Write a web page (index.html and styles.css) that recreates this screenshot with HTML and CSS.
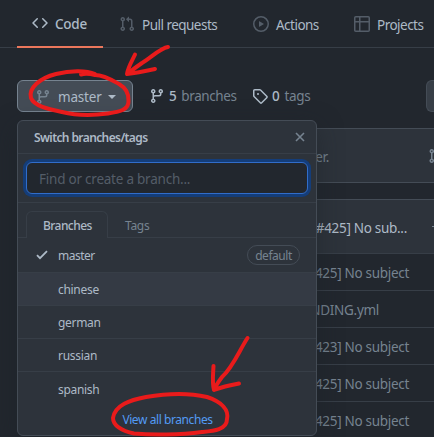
FILE: index.html
```html
<!DOCTYPE html>
<html lang="en">
<head>
<meta charset="utf-8">
<title>Branches</title>
<link rel="stylesheet" href="styles.css">
</head>
<body>
<svg class="defs" aria-hidden="true">
  <symbol id="branch" viewBox="0 0 16 16"><path fill-rule="evenodd" d="M11.75 2.5a.75.75 0 100 1.5.75.75 0 000-1.5zm-2.25.75a2.25 2.25 0 113 2.122V6A2.5 2.5 0 0110 8.5H6a1 1 0 00-1 1v1.128a2.251 2.251 0 11-1.5 0V5.372a2.25 2.25 0 111.5 0v1.836A2.492 2.492 0 016 7h4a1 1 0 001-1v-.628A2.25 2.25 0 019.5 3.25zM4.25 12a.75.75 0 100 1.5.75.75 0 000-1.5zM3.5 3.25a.75.75 0 111.5 0 .75.75 0 01-1.5 0z"/></symbol>
  <symbol id="pull" viewBox="0 0 16 16"><path fill-rule="evenodd" d="M7.177 3.073L9.573.677A.25.25 0 0110 .854v4.792a.25.25 0 01-.427.177L7.177 3.427a.25.25 0 010-.354zM3.75 2.5a.75.75 0 100 1.5.75.75 0 000-1.5zm-2.25.75a2.25 2.25 0 113 2.122v5.256a2.251 2.251 0 11-1.5 0V5.372A2.25 2.25 0 011.5 3.25zM11 2.5h-1V4h1a1 1 0 011 1v5.628a2.251 2.251 0 101.5 0V5A2.5 2.5 0 0011 2.5zm1 10.25a.75.75 0 111.5 0 .75.75 0 01-1.5 0zM3.75 12a.75.75 0 100 1.5.75.75 0 000-1.5z"/></symbol>
</svg>
<nav class="nav">
  <a class="tab tab-active"><svg class="icon" viewBox="0 0 16 16"><path fill-rule="evenodd" d="M4.72 3.22a.75.75 0 011.06 1.06L2.06 8l3.72 3.72a.75.75 0 11-1.06 1.06L.47 8.53a.75.75 0 010-1.06l4.25-4.25zm6.56 0a.75.75 0 10-1.06 1.06L13.94 8l-3.72 3.72a.75.75 0 101.06 1.06l4.25-4.25a.75.75 0 000-1.06l-4.25-4.25z"/></svg><span>Code</span></a>
  <a class="tab tab-pull"><svg class="icon"><use href="#pull"/></svg><span>Pull requests</span></a>
  <a class="tab tab-actions"><svg class="icon" viewBox="0 0 16 16"><path fill-rule="evenodd" d="M1.5 8a6.5 6.5 0 1113 0 6.5 6.5 0 01-13 0zM8 0a8 8 0 100 16A8 8 0 008 0zM6.379 5.227A.25.25 0 006 5.442v5.117a.25.25 0 00.379.214l4.264-2.559a.25.25 0 000-.428L6.379 5.227z"/></svg><span>Actions</span></a>
  <a class="tab tab-projects"><svg class="icon" viewBox="0 0 16 16"><path fill-rule="evenodd" d="M1.75 0A1.75 1.75 0 000 1.75v12.5C0 15.216.784 16 1.75 16h12.5A1.75 1.75 0 0016 14.25V1.75A1.75 1.75 0 0014.25 0H1.75zM1.5 1.75a.25.25 0 01.25-.25H5V5H1.5V1.75zM6.5 1.5V5h8V1.75a.25.25 0 00-.25-.25H6.5zm8 5h-8v8h7.75a.25.25 0 00.25-.25V6.5zM5 14.5v-8H1.5v7.75c0 .138.112.25.25.25H5z"/></svg><span>Projects</span></a>
</nav>
<div class="toolbar">
  <div class="picker">
    <button class="branch-button"><svg class="icon"><use href="#branch"/></svg><span>master</span><i class="caret"></i></button>
    <section class="menu">
      <header class="menu-head"><b>Switch branches/tags</b><svg class="close" viewBox="0 0 10 10"><path d="M1 1l8 8M9 1L1 9"/></svg></header>
      <div class="search"><div class="field">Find or create a branch...</div></div>
      <div class="menu-tabs"><span class="menu-tab selected">Branches</span><span class="menu-tab">Tags</span></div>
      <div class="item first"><svg class="check" viewBox="0 0 12 10"><path d="M1 5.2l3 3L11 1.2"/></svg><span class="name">master</span><span class="label">default</span></div>
      <div class="item hover"><span class="name">chinese</span></div>
      <div class="item"><span class="name">german</span></div>
      <div class="item"><span class="name">russian</span></div>
      <div class="item last"><span class="name">spanish</span></div>
      <footer class="menu-foot"><a>View all branches</a></footer>
    </section>
  </div>
  <div class="stat branches"><svg class="icon"><use href="#branch"/></svg><b>5</b><span>branches</span></div>
  <div class="stat tags"><svg class="icon" viewBox="0 0 16 16"><path fill-rule="evenodd" d="M2.5 7.775V2.75a.25.25 0 01.25-.25h5.025a.25.25 0 01.177.073l6.25 6.25a.25.25 0 010 .354l-5.025 5.025a.25.25 0 01-.354 0l-6.25-6.25a.25.25 0 01-.073-.177zm-1.5 0V2.75C1 1.784 1.784 1 2.75 1h5.025c.464 0 .91.184 1.238.513l6.25 6.25a1.75 1.75 0 010 2.474l-5.026 5.026a1.75 1.75 0 01-2.474 0l-6.25-6.25A1.75 1.75 0 011 7.775zM6 5a1 1 0 100 2 1 1 0 000-2z"/></svg><b>0</b><span>tags</span></div>
  <div class="file-button"></div>
</div>
<div class="notice"><span class="cell">er.</span><svg class="icon"><use href="#pull"/></svg></div>
<main class="files">
  <div class="row latest"><span class="cell">#425] No sub...</span><i class="dash"></i></div>
  <div class="row"><span class="cell">[#425] No subject</span></div>
  <div class="row"><span class="cell yml">FUNDING.yml</span></div>
  <div class="row"><span class="cell">[#423] No subject</span></div>
  <div class="row"><span class="cell">[#425] No subject</span></div>
  <div class="row"><span class="cell">[#425] No subject</span></div>
</main>
<svg class="marks" viewBox="0 0 434 437">
  <path d="M81 74.5C86 73 91 74 95 75C104 75 112 80 119 84C126 88 129 93 128.500 101C129 110 119 112 108 113.500C93 115.500 76 115.500 62 112C48 109 34 106 31 98C28 88 40 78 56 74C70 70.500 86 70 95 74"/>
  <path d="M168 47C160 48 151 58 142 63C136 67 131 71 127 74M135 54.500C132 61 128 67 127 74C137 73 146 71 155 69"/>
  <path d="M227 419C227 430 213 431 202 432C180 435 151 435 134 433.500C121 431 113 425 113 418C115 405 130 400 146 397C169 393 190 393 207 397C222 402 229 410 227 419Z"/>
  <path d="M247.500 338C239 351 233 367 222 377C219 381 216 385 214 390M213.500 366C213 376 212 383 214 390C222 387 231 385 239 383.500"/>
</svg>
</body>
</html>
```
FILE: styles.css
```css
* { box-sizing: border-box; }
body { margin: 0; width: 434px; height: 437px; overflow: hidden; position: relative; background: #22272e; color: #adbac7; font: 13.5px/20px "Noto Sans", sans-serif; letter-spacing: -.3px; }
.defs { display: none; }
.icon { width: 16px; height: 16px; fill: currentColor; flex: none; }
b { font-weight: 500; }
.nav { height: 48px; padding-left: 17px; display: flex; border-bottom: 1px solid #373e47; white-space: nowrap; }
.tab { display: flex; align-items: center; height: 48px; gap: 7px; flex: none; }
.tab span { font-size: 13.5px; letter-spacing: -.52px; padding-top: 2px; }
.tab .icon { color: #545d68; margin-top: -1px; }
.tab-active { width: 86px; padding-left: 15px; gap: 7px; border-bottom: 2px solid #ec775c; }
.tab-active .icon { color: #adbac7; }
.tab-active span { font-weight: 500; letter-spacing: -.25px; }
.tab-pull { width: 150px; padding-left: 16px; }
.tab-actions { width: 101px; }
.toolbar { display: flex; height: 80px; padding: 32px 0 0 17px; }
.picker { position: relative; z-index: 2; width: 116px; height: 32px; }
.branch-button { width: 116px; height: 32px; display: flex; align-items: center; padding: 2px 0 0 17px; border: 1px solid #768390; border-radius: 6px; background: #444c56; color: #adbac7; font: inherit; letter-spacing: -.2px; }
.branch-button .icon { color: #768390; margin-right: 7px; }
.branch-button span { width: 50px; text-align: left; }
.caret { border: 4px solid transparent; border-top-color: #adbac7; border-bottom: 0; }
.stat { display: flex; align-items: center; height: 32px; color: #768390; }
.stat .icon, .stat b { color: #adbac7; }
.stat b { margin: 0 5px 0 4px; }
.branches { margin-left: 16px; width: 103px; letter-spacing: -.4px; }
.file-button { margin-left: auto; width: 8px; height: 32px; border: 1px solid #444c56; border-right: 0; border-radius: 6px 0 0 6px; background: #373e47; }
.notice { height: 55px; margin-left: 17px; display: flex; align-items: center; background: #2d333b; border: solid #444c56; border-width: 1px 0; }
.notice .cell { width: 312px; color: #768390; }
.notice .icon { margin-left: 99px; color: #768390; }
.cell { text-align: right; flex: none; padding-top: 2px; }
.files { margin: 16px 0 0 17px; border-top: 1px solid #444c56; color: #768390; }
.row { height: 37px; display: flex; align-items: center; border-bottom: 1px solid #373e47; }
.row .cell { width: 392px; }
.row .yml { width: 362px; }
.latest { height: 54px; background: #2d333b; color: #adbac7; }
.latest .cell { width: 390px; }
.dash { margin-left: 25px; width: 2px; height: 1px; background: #768390; }
.menu { position: absolute; left: 0; top: 40px; width: 300px; height: 316px; overflow: hidden; border: 1px solid #444c56; border-radius: 6px; background: #2d333b; font-size: 12px; letter-spacing: -.3px; line-height: 18px; box-shadow: 0 8px 24px #1c212880; }
.menu-head { height: 33px; padding: 0 11px 0 16px; display: flex; align-items: center; justify-content: space-between; border-bottom: 1px solid #373e47; }
.menu-head b { font-weight: 600; letter-spacing: -.6px; padding-top: 2px; }
.close { width: 10px; height: 10px; fill: none; stroke: #768390; stroke-width: 1.6; }
.search { height: 49px; padding: 8px; border-bottom: 1px solid #373e47; }
.field { height: 32px; display: flex; align-items: center; padding: 2px 0 0 12px; border: 1px solid #316dca; border-radius: 6px; box-shadow: 0 0 0 3px #143d79; background: #22272e; color: #545d68; font-size: 13.5px; letter-spacing: -.23px; }
.menu-tabs { height: 35px; display: flex; padding: 8px 0 0 8px; border-bottom: 1px solid #373e47; color: #768390; }
.menu-tab { height: 27px; padding: 6px 17px 0; }
.selected { width: 82px; padding: 5px 16px; border: 1px solid #373e47; border-bottom: 0; border-radius: 6px 6px 0 0; background: #2d333b; color: #adbac7; letter-spacing: -.55px; font-weight: 500; }
.item { height: 33px; display: flex; align-items: center; padding: 0 16px 0 40px; border-bottom: 1px solid #373e47; }
.name { padding-top: 2px; }
.first .name { letter-spacing: -.5px; }
.first { height: 35px; padding-left: 18px; }
.check { width: 12px; height: 10px; margin-right: 10px; fill: none; stroke: #adbac7; stroke-width: 1.8; }
.hover { background: #343a44; }
.last { border: 0; }
.label { margin-left: auto; width: 53px; height: 20px; border: 1px solid #444c56; border-radius: 10px; text-align: center; color: #768390; letter-spacing: -.45px; line-height: 19px; }
.menu-foot { height: 31px; padding: 6px 0 0 1px; text-align: center; color: #539bf5; letter-spacing: -.42px; }
.marks { position: absolute; inset: 0; z-index: 3; width: 434px; height: 437px; pointer-events: none; fill: none; stroke: #e91b1b; stroke-width: 4; stroke-linecap: round; stroke-linejoin: round; }
```
